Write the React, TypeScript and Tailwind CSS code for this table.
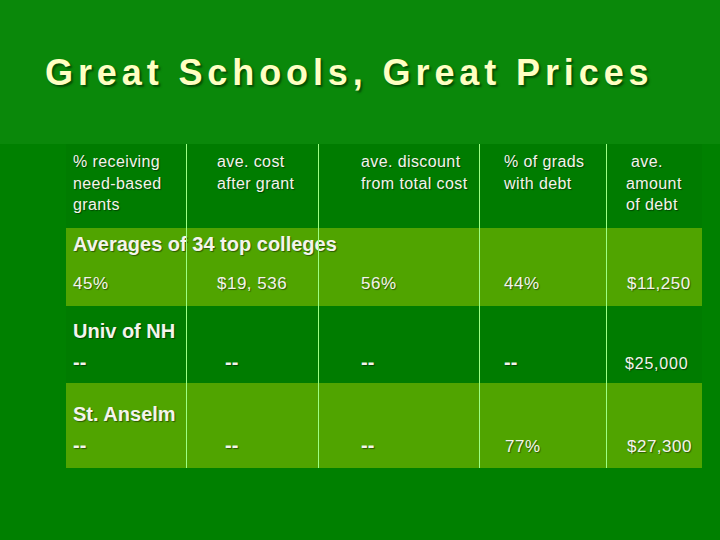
import React from "react";

const cols = "grid grid-cols-[121px_132px_161px_127px_95px]";
const sh = "[text-shadow:1px_1px_1px_rgba(0,0,0,0.45)]";

function Values({ items, className }: { items: { t: string; c: string }[]; className: string }) {
  return (
    <div className={`${cols} items-baseline ${className}`}>
      {items.map((it, i) => (
        <div key={i} className={it.c}>
          {it.t}
        </div>
      ))}
    </div>
  );
}

export default function App() {
  return (
    <div
      className="w-[720px] h-[540px] bg-[#008000] overflow-hidden text-[#f4f4ec]"
      style={{ fontFamily: '"Liberation Sans", Arial, sans-serif' }}
    >
      <div className="h-[144px] bg-[#0a880a] pt-[55px] pl-[45px]">
        <h1 className="text-[36px] leading-[36px] font-bold tracking-[4.9px] text-[#ffffc2] [text-shadow:2px_2px_2px_rgba(0,40,0,0.6)]">
          Great Schools, Great Prices
        </h1>
      </div>

      <div className="relative ml-[66px] w-[636px]">
        {/* header */}
        <div className={`${cols} h-[84px] bg-[#007c00] pt-[7px] text-[16px] leading-[21.5px] tracking-[0.4px] ${sh}`}>
          <div className="pl-[7px]">
            % receiving
            <br />
            need-based
            <br />
            grants
          </div>
          <div className="pl-[30px]">
            ave. cost
            <br />
            after grant
          </div>
          <div className="pl-[42px]">
            ave. discount
            <br />
            from total cost
          </div>
          <div className="pl-[24px]">
            % of grads
            <br />
            with debt
          </div>
          <div className="pl-[19px]">
            <span className="ml-[5px]">ave.</span>
            <br />
            amount
            <br />
            of debt
          </div>
        </div>

        {/* averages */}
        <div className={`h-[78px] bg-[#50a400] pt-[4px] ${sh}`}>
          <div className="pl-[7px] text-[20px] leading-[24px] font-bold whitespace-nowrap">
            Averages of 34 top colleges
          </div>
          <Values
            className="mt-[17.5px] text-[17px] leading-[20px] tracking-[0.5px]"
            items={[
              { t: "45%", c: "pl-[7px]" },
              { t: "$19, 536", c: "pl-[30px]" },
              { t: "56%", c: "pl-[42px]" },
              { t: "44%", c: "pl-[24px]" },
              { t: "$11,250", c: "pl-[20px]" },
            ]}
          />
        </div>

        {/* Univ of NH */}
        <div className={`h-[77px] bg-[#007c00] pt-[13px] ${sh}`}>
          <div className="pl-[7px] text-[20px] leading-[24px] font-bold whitespace-nowrap">Univ of NH</div>
          <Values
            className="mt-[8.5px] leading-[20px]"
            items={[
              { t: "--", c: "pl-[7px] text-[20px] font-bold" },
              { t: "--", c: "pl-[38px] text-[20px] font-bold" },
              { t: "--", c: "pl-[42px] text-[20px] font-bold" },
              { t: "--", c: "pl-[24px] text-[20px] font-bold" },
              { t: "$25,000", c: "pl-[18px] text-[16px] tracking-[0.8px]" },
            ]}
          />
        </div>

        {/* St. Anselm */}
        <div className={`h-[85px] bg-[#50a400] pt-[19px] ${sh}`}>
          <div className="pl-[7px] text-[20px] leading-[24px] font-bold whitespace-nowrap">St. Anselm</div>
          <Values
            className="mt-[9px] leading-[20px]"
            items={[
              { t: "--", c: "pl-[7px] text-[20px] font-bold" },
              { t: "--", c: "pl-[38px] text-[20px] font-bold" },
              { t: "--", c: "pl-[42px] text-[20px] font-bold" },
              { t: "77%", c: "pl-[25px] text-[17px] tracking-[0.5px]" },
              { t: "$27,300", c: "pl-[20px] text-[17px] tracking-[0.5px]" },
            ]}
          />
        </div>

        {/* vertical rules over content */}
        <div className={`absolute inset-0 pointer-events-none ${cols}`}>
          <div className="border-r border-[#9cff84]" />
          <div className="border-r border-[#9cff84]" />
          <div className="border-r border-[#9cff84]" />
          <div className="border-r border-[#9cff84]" />
          <div />
        </div>
      </div>
    </div>
  );
}
